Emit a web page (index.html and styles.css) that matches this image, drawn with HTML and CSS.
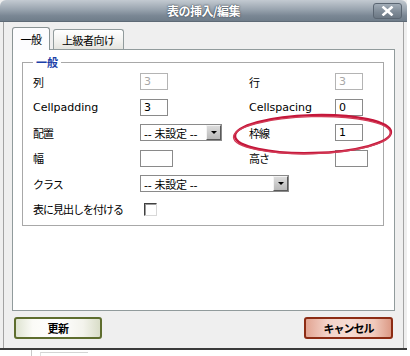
FILE: index.html
```html
<!DOCTYPE html>
<html lang="ja">
  <head>
    <meta charset="UTF-8" />
    <meta name="viewport" content="width=device-width, initial-scale=1.0" />
    <title>表の挿入/編集</title>
    <link rel="stylesheet" href="styles.css">
  </head>
  <body>
    <div class="dialog">
      <div class="titlebar">
        <span class="title">表の挿入/編集</span>
        <span class="close">
          <svg width="13" height="10" viewBox="0 0 13 10">
            <path d="M2.5 1.5 L10.5 8.5 M10.5 1.5 L2.5 8.5" stroke="#fff" stroke-width="2.6" stroke-linecap="square" />
          </svg>
        </span>
      </div>

      <div class="body">
        <div class="tabs">
          <span class="tab active">一般</span>
          <span class="tab">上級者向け</span>
        </div>

        <div class="panel">
          <fieldset class="group">
            <legend>一般</legend>
            <div class="grid">
              <label class="jp">列</label>
              <input class="field" value="3" disabled />
              <label class="jp">行</label>
              <input class="field" value="3" disabled />

              <label>Cellpadding</label>
              <input class="field" value="3" />
              <label>Cellspacing</label>
              <input class="field" value="0" />

              <label class="jp">配置</label>
              <div class="select">
                <span class="option">-- 未設定 --</span>
                <span class="arrow"></span>
              </div>
              <label class="jp">枠線</label>
              <input class="field" value="1" />

              <label class="jp">幅</label>
              <input class="field wide" value="" />
              <label class="jp">高さ</label>
              <input class="field wide" value="" />

              <label class="jp">クラス</label>
              <div class="select long">
                <span class="option">-- 未設定 --</span>
                <span class="arrow"></span>
              </div>

              <label class="jp">表に見出しを付ける</label>
              <span class="check"></span>
            </div>
          </fieldset>

          <!-- annotation circle round the border field -->
          <svg class="mark" width="170" height="48" viewBox="0 0 170 48">
            <ellipse cx="82" cy="24" rx="78" ry="19" fill="none" stroke="#c4163a" stroke-width="2.4" />
            <ellipse cx="81" cy="25" rx="78.5" ry="18.5" fill="none" stroke="#d23a55" stroke-width="1.4" />
          </svg>
        </div>

        <div class="actions">
          <button class="btn ok">更新</button>
          <button class="btn cancel">キャンセル</button>
        </div>
      </div>
    </div>
    <div class="below">
      <span class="tick"></span>
      <span class="stub"></span>
    </div>
  </body>
</html>
```

FILE: styles.css
```css
html {
  box-sizing: border-box;
}
*,
*::before,
*::after {
  box-sizing: inherit;
}
body {
  margin: 0;
  padding: 0;
  background-color: #ffffff;
  font-family: "DejaVu Sans", "Noto Sans CJK JP", sans-serif;
  font-size: 11px;
  color: #000;
}
.jp {
  font-family: "Noto Sans CJK JP", sans-serif;
  letter-spacing: -1px;
}

/* window */
.dialog {
  width: 407px;
  background-color: #efefef;
  border-bottom: 2px solid #3a3a3a;
}
.titlebar {
  height: 22px;
  display: grid;
  grid-template-columns: 1fr auto 1fr;
  align-items: center;
  border-radius: 6px 6px 0 0;
  background: linear-gradient(#c3cad1, #99a4af 45%, #7a8794 75%, #6f7d8a);
  border-bottom: 1px solid #5e6a76;
}
.title {
  grid-column: 2;
  font-family: "Noto Sans CJK JP", sans-serif;
  font-weight: bold;
  font-size: 12px;
  letter-spacing: -0.5px;
  color: #fff;
  text-shadow: 0 0 2px #3d4652, 0 0 1px #3d4652;
}
.close {
  grid-column: 3;
  justify-self: end;
  margin-right: 5px;
  width: 29px;
  height: 16px;
  display: flex;
  align-items: center;
  justify-content: center;
  border: 1px solid #5b6672;
  border-radius: 3px;
  background: linear-gradient(#a1acb7, #7d8995 60%, #6c7884);
}

.body {
  margin: 0 3px;
  border-left: 1px solid #a3a3a3;
  border-right: 1px solid #a3a3a3;
  padding: 5px 7px 9px 8px;
}

/* tabs */
.tabs {
  display: flex;
  align-items: flex-end;
  gap: 3px;
}
.tab {
  height: 20px;
  padding: 0 8px;
  display: flex;
  align-items: center;
  justify-content: center;
  white-space: nowrap;
  border: 1px solid #919b9c;
  border-bottom: none;
  border-radius: 3px 3px 0 0;
  background: linear-gradient(#ffffff, #f1f1ee 60%, #e4e4df);
  font-family: "Noto Sans CJK JP", sans-serif;
  letter-spacing: -0.5px;
}
.tab.active {
  height: 23px;
  width: 38px;
  padding: 0;
  margin-bottom: -1px;
  background: #fcfcfe;
  position: relative;
  z-index: 1;
  border-color: #8a9394;
}

.panel {
  position: relative;
  width: 383px;
  height: 262px;
  background-color: #fff;
  border: 1px solid #919b9c;
  padding: 5px 10px 0 9px;
}
.group {
  margin: 0;
  padding: 0 8px 3px 10px;
  border: 1px solid #a8a8a8;
}
.group legend {
  padding: 0 3px;
  line-height: 14px;
  font-family: "Noto Sans CJK JP", sans-serif;
  font-weight: bold;
  color: #1b3fa8;
}
.grid {
  display: grid;
  grid-template-columns: 107px 109px 86px auto;
  grid-auto-rows: 25.5px;
  align-items: center;
  justify-items: start;
}
.grid label {
  white-space: nowrap;
}
.field {
  width: 28px;
  height: 17px;
  margin: 0;
  padding: 0 3px;
  border: 1px solid #8a8a8a;
  font-family: "DejaVu Sans", sans-serif;
  font-size: 11px;
  color: #000;
  background: #fff;
}
.field:disabled {
  color: #a8a8a8;
  border-color: #b4b4b4;
}
.field.wide {
  width: 33px;
}

.select {
  width: 82px;
  height: 17px;
  display: flex;
  align-items: center;
  justify-content: space-between;
  border: 1px solid #8a8a8a;
  padding: 0 0 0 3px;
  background: #fff;
}
.option {
  font-family: "DejaVu Sans", "Noto Sans CJK JP", sans-serif;
  font-size: 11px;
  letter-spacing: -0.3px;
  white-space: nowrap;
}
.select.long {
  grid-column: span 3;
  width: 149px;
}
.arrow {
  width: 15px;
  height: 15px;
  flex-shrink: 0;
  border: 1px solid;
  border-color: #f4f4f4 #5a5a5a #5a5a5a #f4f4f4;
  background: linear-gradient(#dcdcdc, #b9b9b9);
  position: relative;
}
.arrow::after {
  content: "";
  position: absolute;
  left: 4px;
  top: 5px;
  border-left: 3px solid transparent;
  border-right: 3px solid transparent;
  border-top: 3px solid #000;
}
.check {
  width: 13px;
  height: 13px;
  margin-left: 4px;
  border: 1px solid;
  border-color: #404040 #d8d8d8 #d8d8d8 #404040;
  box-shadow: inset 1px 1px 0 #9a9a9a;
  background: #fff;
}

.mark {
  position: absolute;
  left: 218px;
  top: 60px;
  transform: rotate(-1.5deg);
}

/* buttons */
.actions {
  display: flex;
  justify-content: space-between;
  margin-top: 6px;
  padding: 0 3px 0 2px;
}
.btn {
  width: 88px;
  height: 22px;
  border-radius: 3px;
  border: 2px solid;
  font-family: "Noto Sans CJK JP", sans-serif;
  font-weight: bold;
  font-size: 11px;
  letter-spacing: -0.5px;
  padding: 0;
  color: #000;
}
.btn.ok {
  border-color: #5e6d2e;
  background: linear-gradient(90deg, #dfe4d2, #fbfbf7 20%, #ffffff 50%, #f3f3ec 80%, #d9ddc8);
}
.btn.cancel {
  width: 89px;
  border-color: #8c2c14;
  background: linear-gradient(90deg, #e2a492, #f3d3c9 25%, #f6dcd3 50%, #f0cabc 80%, #dc9a86);
  letter-spacing: -1px;
}

.below {
  height: 6px;
  display: flex;
  align-items: flex-start;
}
.tick {
  width: 1px;
  height: 6px;
  margin-left: 31px;
  background: #c8c8c8;
}
.stub {
  width: 48px;
  height: 4px;
  margin: 2px 0 0 8px;
  border-top: 1px solid #d4d4d4;
  border-left: 1px solid #e0e0e0;
}
```
